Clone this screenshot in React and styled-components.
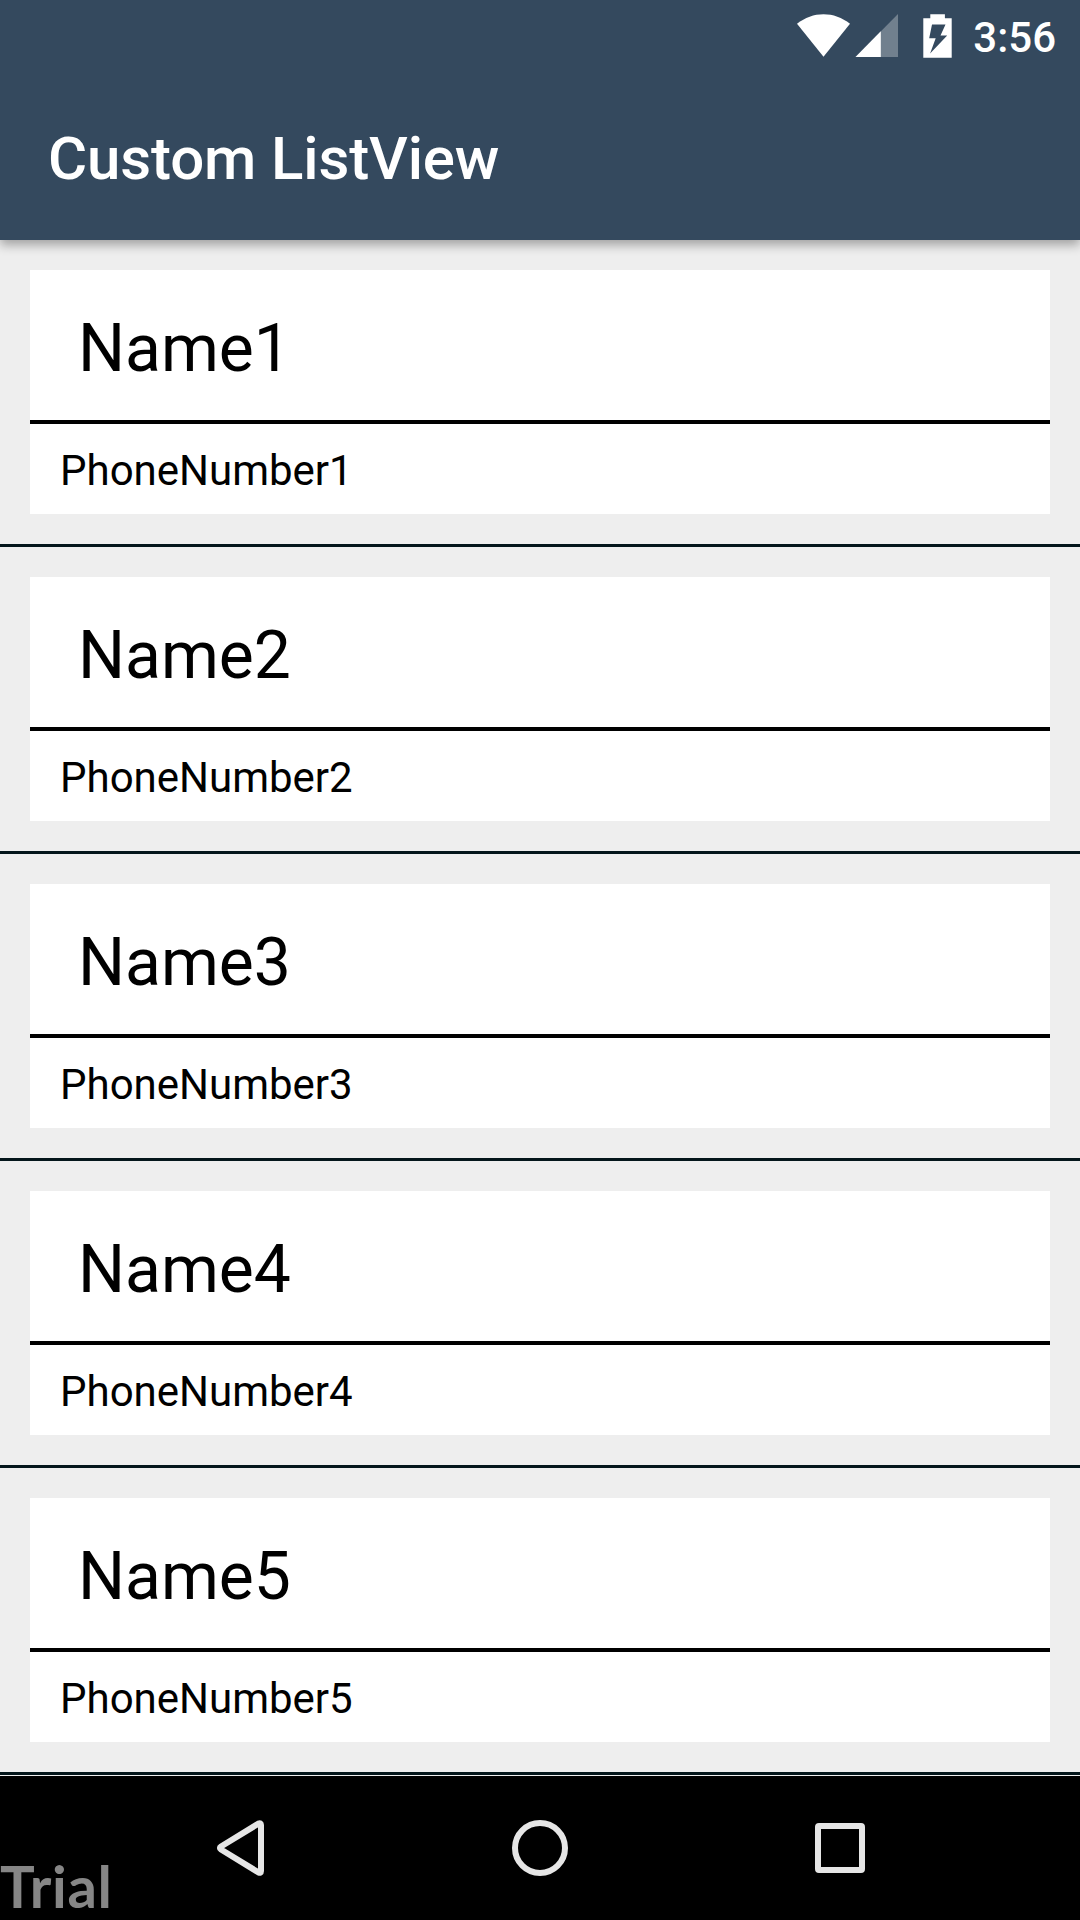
import React from "react";
import styled, { createGlobalStyle } from "styled-components";

const GlobalStyle = createGlobalStyle`
  body {
    margin: 0;
    background: #eeeeee;
    font-family: Roboto, "Noto Sans", sans-serif;
    -webkit-font-smoothing: antialiased;
  }
  * { box-sizing: border-box; }
`;

const Screen = styled.div`
  position: relative;
  display: flex;
  flex-direction: column;
  width: 1080px;
  height: 1920px;
  overflow: hidden;
`;

const Header = styled.header`
  flex: none;
  z-index: 1;
  height: 240px;
  background: #34495e;
  color: #ffffff;
  box-shadow: 0 5px 10px rgba(0, 0, 0, 0.32);
`;

const StatusBar = styled.div`
  display: flex;
  justify-content: flex-end;
  align-items: flex-start;
  height: 72px;
  padding: 14px 24px 0 0;
`;

const StatusIcon = styled.svg`
  flex: none;
  margin-right: ${(p) => p.$gap}px;
`;

const Clock = styled.span`
  margin-top: -11px;
  font-size: 42px;
  font-weight: 500;
  line-height: 70px;
`;

const Toolbar = styled.div`
  display: flex;
  align-items: center;
  height: 168px;
  padding: 5px 48px 0;
`;

const Title = styled.h1`
  margin: 0;
  font-size: 60px;
  font-weight: 500;
  line-height: 70px;
  letter-spacing: -0.13px;
`;

const List = styled.ul`
  flex: none;
  height: 1536px;
  margin: 0;
  padding: 0;
  list-style: none;
`;

const Row = styled.li`
  height: 307px;
  padding: 30px;
  border-bottom: 3px solid #04161b;
`;

const Card = styled.article`
  height: 244px;
  background: #ffffff;
  color: #000000;
`;

const Name = styled.div`
  height: 154px;
  padding: 7px 48px 0;
  border-bottom: 4px solid #000000;
  font-size: 66px;
  line-height: 143px;
`;

const Phone = styled.div`
  height: 90px;
  padding: 3px 30px 0;
  font-size: 42px;
  line-height: 87px;
`;

const NavBar = styled.nav`
  display: flex;
  justify-content: center;
  gap: 156px;
  height: 144px;
  background: #000000;
`;

const NavButton = styled.button`
  display: flex;
  padding: 0;
  border: 0;
  background: none;
`;

const Watermark = styled.span`
  position: absolute;
  left: 0;
  bottom: 1px;
  font-family: Lato, "Noto Sans", sans-serif;
  font-size: 58px;
  font-weight: 700;
  line-height: 66px;
  letter-spacing: 0.7px;
  color: #868686;
`;

const contacts = [1, 2, 3, 4, 5].map((n) => ({
  name: `Name${n}`,
  phone: `PhoneNumber${n}`,
}));

function NavIcon({ label, children }) {
  return (
    <NavButton aria-label={label}>
      <svg width="144" height="144" fill="none" stroke="#e6e6e6" strokeWidth="6" strokeLinejoin="round">
        {children}
      </svg>
    </NavButton>
  );
}

export default function App() {
  return (
    <Screen>
      <GlobalStyle />
      <Header>
        <StatusBar>
          <StatusIcon $gap={5} width="54" height="43" viewBox="0 0 54 43" fill="#fff">
            <path d="M1 9.8C9 3.6 18 0.3 27.500 0.3S46 3.600 54 9.800L27.500 42.800Z" />
          </StatusIcon>
          <StatusIcon $gap={25} width="43" height="43" viewBox="0 0 43 43" fill="#fff">
            <path d="M43 0V43H0.500Z" opacity="0.3" />
            <path d="M25.800 17.300V43H0.500Z" />
          </StatusIcon>
          <StatusIcon $gap={21} width="29" height="44" viewBox="0 0 29 44" fill="#fff">
            <path
              fillRule="evenodd"
              d="M7.300 0.300H21.900V4.300H28.700V43.700H0.300V4.300H7.300ZM9 10.600L6.200 24.200H12.700L7.100 39.600L24.200 21.500H17.500L22.500 10.600Z"
            />
          </StatusIcon>
          <Clock>3:56</Clock>
        </StatusBar>
        <Toolbar>
          <Title>Custom ListView</Title>
        </Toolbar>
      </Header>
      <List>
        {contacts.map((c) => (
          <Row key={c.name}>
            <Card>
              <Name>{c.name}</Name>
              <Phone>{c.phone}</Phone>
            </Card>
          </Row>
        ))}
      </List>
      <NavBar>
        <NavIcon label="Back">
          <path d="M90.500 47.600L53 70.500Q50.800 72 53 73.500L90.500 96.400Q93 97.500 93 95V49Q93 46.500 90.500 47.600Z" />
        </NavIcon>
        <NavIcon label="Home">
          <circle cx="72" cy="72" r="25" />
        </NavIcon>
        <NavIcon label="Recents">
          <rect x="50" y="50" width="44" height="44" rx="1" />
        </NavIcon>
      </NavBar>
      <Watermark>Trial</Watermark>
    </Screen>
  );
}
